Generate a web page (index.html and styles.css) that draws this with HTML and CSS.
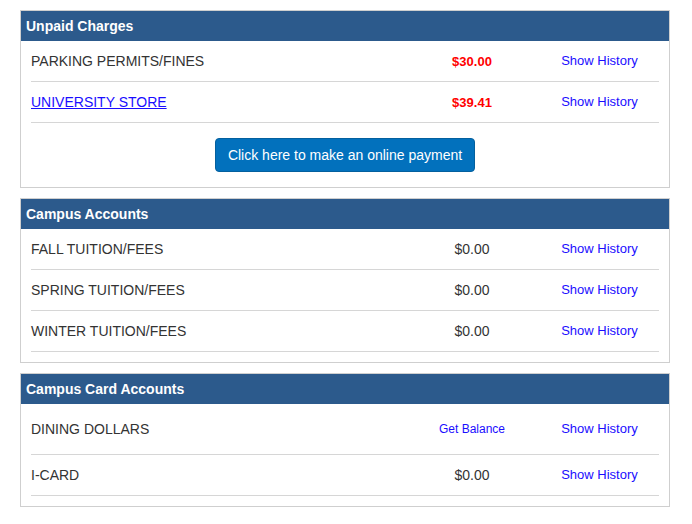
FILE: index.html
```html
<!DOCTYPE html>
<html>
<head>
<meta charset="utf-8">
<link rel="stylesheet" href="styles.css">
</head>
<body>
<div class="page">
  <section class="panel">
    <h2 class="panel-head">Unpaid Charges</h2>
    <div class="panel-body">
      <div class="row">
        <span class="name">PARKING PERMITS/FINES</span>
        <span class="amount due">$30.00</span>
        <a class="hist" href="#">Show History</a>
      </div>
      <div class="row">
        <a class="name link" href="#">UNIVERSITY STORE</a>
        <span class="amount due">$39.41</span>
        <a class="hist" href="#">Show History</a>
      </div>
      <div class="actions">
        <a class="btn" href="#">Click here to make an online payment</a>
      </div>
    </div>
  </section>

  <section class="panel">
    <h2 class="panel-head">Campus Accounts</h2>
    <div class="panel-body">
      <div class="row">
        <span class="name">FALL TUITION/FEES</span>
        <span class="amount">$0.00</span>
        <a class="hist" href="#">Show History</a>
      </div>
      <div class="row">
        <span class="name">SPRING TUITION/FEES</span>
        <span class="amount">$0.00</span>
        <a class="hist" href="#">Show History</a>
      </div>
      <div class="row">
        <span class="name">WINTER TUITION/FEES</span>
        <span class="amount">$0.00</span>
        <a class="hist" href="#">Show History</a>
      </div>
    </div>
  </section>

  <section class="panel">
    <h2 class="panel-head">Campus Card Accounts</h2>
    <div class="panel-body">
      <div class="row tall">
        <span class="name">DINING DOLLARS</span>
        <a class="amount balance" href="#">Get Balance</a>
        <a class="hist" href="#">Show History</a>
      </div>
      <div class="row">
        <span class="name">I-CARD</span>
        <span class="amount">$0.00</span>
        <a class="hist" href="#">Show History</a>
      </div>
    </div>
  </section>
</div>
</body>
</html>
```

FILE: styles.css
```css
* { box-sizing: border-box; }
html, body { margin: 0; padding: 0; background: #fff; }
body {
  font-family: "Liberation Sans", Arial, sans-serif;
  font-size: 14px;
  color: #333;
}
.page {
  padding: 10px 0 0 20px;
  width: 670px;
  display: flex;
  flex-direction: column;
  gap: 10px;
}
.panel {
  width: 650px;
  border: 1px solid #cfcfcf;
  background: #fff;
}
.panel-head {
  margin: 0;
  height: 30px;
  line-height: 30px;
  padding: 0 5px;
  background: #2c5a8c;
  color: #fff;
  font-size: 14px;
  font-weight: bold;
}
.panel-body {
  padding: 0 10px 10px 10px;
}
.row {
  display: grid;
  grid-template-columns: 1fr 136px 119px;
  align-items: center;
  height: 41px;
  border-bottom: 1px solid #d6d6d6;
}
.row.tall { height: 51px; }
.name { color: #333; font-size: 14px; }
.name.link { color: #1a0dff; text-decoration: underline; justify-self: start; }
.amount { text-align: center; font-size: 14px; color: #333; }
.amount.due { color: #ff0000; font-weight: bold; font-size: 13px; }
.amount.balance { color: #1a0dff; text-decoration: none; font-size: 12px; }
.hist {
  text-align: center;
  color: #1a0dff;
  text-decoration: none;
  font-size: 13px;
  padding-bottom: 1px;
}
.actions {
  display: flex;
  justify-content: center;
  padding: 15px 0 5px;
}
.btn {
  display: inline-block;
  height: 34px;
  line-height: 32px;
  padding: 0 12px;
  background: #0271bd;
  border: 1px solid #04609e;
  border-radius: 4px;
  color: #fff;
  text-decoration: none;
  font-size: 14px;
}
```
